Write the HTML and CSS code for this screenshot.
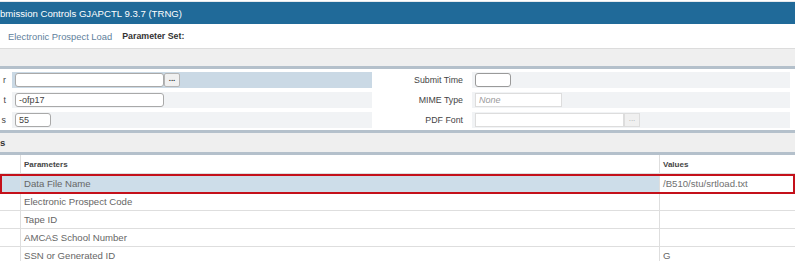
FILE: index.html
```html
<!DOCTYPE html>
<html lang="en">
<head>
    <meta charset="UTF-8">
    <title>Process Submission Controls GJAPCTL</title>
    <link rel="stylesheet" href="styles.css">
</head>
<body>

<div class="titlebar">
    <span class="title">bmission Controls GJAPCTL 9.3.7 (TRNG)</span>
</div>

<div class="keyblock">
    <span class="process">Electronic Prospect Load</span>
    <span class="paramset">Parameter Set:</span>
</div>

<div class="band"></div>

<section class="options">
    <div class="label">r</div>
    <div class="field current">
        <div class="input wide"></div><div class="lov">...</div>
    </div>
    <div class="label right">Submit Time</div>
    <div class="field">
        <div class="input time"></div>
    </div>

    <div class="label">t</div>
    <div class="field">
        <div class="input wide">-ofp17</div>
    </div>
    <div class="label right">MIME Type</div>
    <div class="field">
        <div class="input mime placeholder">None</div>
    </div>

    <div class="label">s</div>
    <div class="field">
        <div class="input short">55</div>
    </div>
    <div class="label right">PDF Font</div>
    <div class="field">
        <div class="input font light"></div><div class="lov light">...</div>
    </div>
</section>

<div class="section-head">s</div>

<div class="grid">
    <div class="grid-row head">
        <div class="sel"></div>
        <div class="cell name">Parameters</div>
        <div class="cell value">Values</div>
    </div>
    <div class="grid-row selected">
        <div class="sel"></div>
        <div class="cell name">Data File Name</div>
        <div class="cell value editing">/B510/stu/srtload.txt</div>
    </div>
    <div class="grid-row">
        <div class="sel"></div>
        <div class="cell name">Electronic Prospect Code</div>
        <div class="cell value"></div>
    </div>
    <div class="grid-row">
        <div class="sel"></div>
        <div class="cell name">Tape ID</div>
        <div class="cell value"></div>
    </div>
    <div class="grid-row">
        <div class="sel"></div>
        <div class="cell name">AMCAS School Number</div>
        <div class="cell value"></div>
    </div>
    <div class="grid-row">
        <div class="sel"></div>
        <div class="cell name">SSN or Generated ID</div>
        <div class="cell value">G</div>
    </div>
</div>

</body>
</html>
```

FILE: styles.css
```css
body {
    margin: 0;
    background-color: #ffffff;
    font-family: "Liberation Sans", Arial, sans-serif;
    color: #555555;
    overflow: hidden;
}

/* --- Header --- */
.titlebar {
    margin-top: 1px;
    border-top: 1px solid #e6e9ec;
    height: 22px;
    background-color: #206a99;
    display: flex;
    align-items: center;
}
.title {
    color: #ffffff;
    font-size: 9.6px;
    white-space: nowrap;
}
.keyblock {
    height: 24px;
    display: flex;
    align-items: center;
    padding-left: 8px;
    gap: 10px;
    border-bottom: 1px solid #dcdcdc;
}
.process {
    color: #5f819c;
    font-size: 9.4px;
}
.paramset {
    color: #333333;
    font-size: 8.8px;
    font-weight: bold;
}
.band {
    height: 17px;
    background-color: #efefef;
}

/* --- Printer options --- */
.options {
    border-top: 3px solid #b4c0cb;
    border-bottom: 3px solid #b4c0cb;
    padding: 3px 5px 2px 0;
    display: grid;
    grid-template-columns: 12px 360px 100px 1fr;
    grid-auto-rows: 16px;
    row-gap: 4px;
}
.label {
    display: flex;
    justify-content: flex-end;
    align-items: center;
    white-space: nowrap;
    font-size: 8.8px;
    color: #444444;
    padding-right: 6px;
}
.label.right {
    padding-right: 9px;
}
.field {
    display: flex;
    align-items: center;
    padding-left: 3px;
    background-color: #f1f3f5;
}
.field.current {
    background-color: #cad9e5;
}
.input {
    box-sizing: border-box;
    height: 14px;
    background-color: #ffffff;
    border: 1px solid #a9a9a9;
    border-radius: 3px;
    font-size: 9px;
    color: #444444;
    padding-left: 3px;
    line-height: 12px;
}
.input.wide { width: 149px; }
.input.short { width: 36px; }
.input.time { width: 36px; border-color: #9a9a9a; }
.input.mime { width: 87px; border-color: #dddddd; border-radius: 0; }
.input.font { width: 149px; }
.input.light { border-color: #dddddd; border-radius: 0; }
.placeholder {
    font-style: italic;
    color: #9a9a9a;
}
.lov {
    box-sizing: border-box;
    width: 16px;
    height: 14px;
    border: 1px solid #b5b5b5;
    border-radius: 2px;
    background-color: #f0f0f0;
    font-size: 8px;
    font-weight: bold;
    color: #333333;
    text-align: center;
    line-height: 9px;
}
.lov.light {
    color: #aaaaaa;
    border-color: #dddddd;
    border-radius: 0;
    font-weight: normal;
}

/* --- Parameter values --- */
.section-head {
    height: 19px;
    background-color: #efefef;
    border-bottom: 3px solid #b4c0cb;
    display: flex;
    align-items: center;
    font-size: 9.5px;
    font-weight: bold;
    color: #333333;
}
.grid {
    font-size: 9.6px;
}
.grid-row {
    display: flex;
    height: 17px;
    border-bottom: 1px solid #dedede;
}
.grid-row .sel {
    width: 20px;
    border-right: 1px solid #dedede;
}
.cell {
    display: flex;
    align-items: center;
    padding-left: 3px;
    color: #666666;
}
.cell.name {
    width: 635px;
    border-right: 1px solid #dedede;
}
.cell.value {
    flex: 1;
}
.grid-row.head {
    height: 18px;
}
.grid-row.head .cell {
    font-size: 8px;
    font-weight: bold;
    color: #444444;
}
.grid-row.selected {
    background-color: #cddde9;
    outline: 2px solid #c4101a;
    outline-offset: -1px;
    margin: 1px 1px 0 1px;
}
.grid-row.selected .sel {
    width: 19px;
}
.cell.editing {
    background-color: #ffffff;
    color: #707070;
}
```
